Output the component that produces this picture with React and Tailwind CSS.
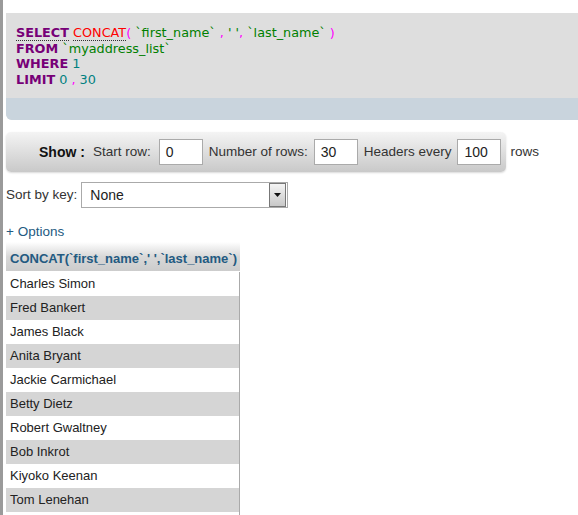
import React from 'react'

const names = [
  'Charles Simon',
  'Fred Bankert',
  'James Black',
  'Anita Bryant',
  'Jackie Carmichael',
  'Betty Dietz',
  'Robert Gwaltney',
  'Bob Inkrot',
  'Kiyoko Keenan',
  'Tom Lenehan',
  '',
]

function SqlBox() {
  const kw = 'font-bold text-[#770077]'
  const str = 'text-[#008000]'
  const pun = 'text-[#ff00ff]'
  const num = 'text-[#008080]'
  return (
    <div className="mt-[13px] rounded-bl-[6px] overflow-hidden bg-[#dedede]">
      <div className="px-[10px] pt-[12px] h-[85px] text-[12.8px] leading-[15.7px] font-['DejaVu_Sans',sans-serif] whitespace-pre">
        <div>
          <span className={`${kw} border-b border-dotted border-[#333]`}>SELECT</span>{' '}
          <span className="text-[#ff0000] border-b border-dotted border-[#333]">CONCAT</span>
          <span className={pun}>( </span>
          <span className={str}>`first_name`</span>
          <span className={pun}> , </span>
          <span className={str}>' '</span>
          <span className={pun}>, </span>
          <span className={str}>`last_name`</span>
          <span className={pun}> )</span>
        </div>
        <div>
          <span className={kw}>FROM</span> <span className={str}>`myaddress_list`</span>
        </div>
        <div>
          <span className={kw}>WHERE</span> <span className={num}>1</span>
        </div>
        <div>
          <span className={kw}>LIMIT</span> <span className={num}>0</span>
          <span className={pun}> , </span>
          <span className={num}>30</span>
        </div>
      </div>
      <div className="h-[22px] bg-[#c9d4dd]" />
    </div>
  )
}

function Field({ value }) {
  return (
    <div className="shrink-0 w-[44px] h-[26px] border border-[#aaa] bg-white px-[6px] flex items-center text-[14px] text-[#222]">
      {value}
    </div>
  )
}

export default function App() {
  return (
    <div className="w-[578px] h-[515px] overflow-hidden bg-white border-l-[3px] border-[#9a9a9a] pl-[3px] font-['Liberation_Sans',Arial,sans-serif] text-[13.5px] text-[#222]">
      <SqlBox />

      {/* navigation bar */}
      <div className="mt-[12px] w-[500px] h-[40px] rounded-[5px] bg-gradient-to-b from-[#f4f4f4] to-[#c9c9c9] shadow-[0_1px_2px_rgba(0,0,0,0.15)] flex items-center pl-[33px] text-[#333] whitespace-nowrap">
        <span className="font-bold text-[14px] text-[#111] mr-[8px]">Show :</span>
        <span className="mr-[8px]">Start row:</span>
        <Field value="0" />
        <span className="mx-[6px]">Number of rows:</span>
        <Field value="30" />
        <span className="mx-[6px]">Headers every</span>
        <Field value="100" />
        <span className="ml-[9px]">rows</span>
      </div>

      {/* sort */}
      <div className="mt-[10px] flex items-center h-[26px] whitespace-nowrap">
        <span className="mr-[4px] text-[#333]">Sort by key:</span>
        <div className="w-[207px] h-[26px] border border-[#aaa] bg-white flex items-center">
          <span className="flex-1 pl-[8px] text-[14px] text-[#222]">None</span>
          <div className="w-[17px] h-[24px] mr-[1px] border border-[#777] bg-gradient-to-b from-[#f4f4f4] to-[#c8c8c8] flex items-center justify-center">
            <svg width="7" height="4" viewBox="0 0 7 4"><path d="M0 0h7L3.5 4z" fill="#111" /></svg>
          </div>
        </div>
      </div>

      <div className="mt-[16px] text-[#235a81] leading-[16px]">+ Options</div>

      {/* results table */}
      <div className="mt-[2px] w-[234px]">
        <div className="h-[29px] bg-gradient-to-b from-[#ffffff] via-[#d8d8d8] to-[#cccccc] flex items-end pb-[3px] pl-[4px] font-bold text-[13px] text-[#235a81] whitespace-nowrap">
          CONCAT(`first_name`,' ',`last_name`)
        </div>
        <div className="border-r border-[#aaa] mt-[1px]">
          {names.map((n, i) => (
            <div key={i} className={`h-[24px] flex items-center pl-[4px] text-[13px] text-[#222] ${i % 2 ? 'bg-[#d5d5d5]' : 'bg-white'}`}>
              {n}
            </div>
          ))}
        </div>
      </div>
    </div>
  )
}
